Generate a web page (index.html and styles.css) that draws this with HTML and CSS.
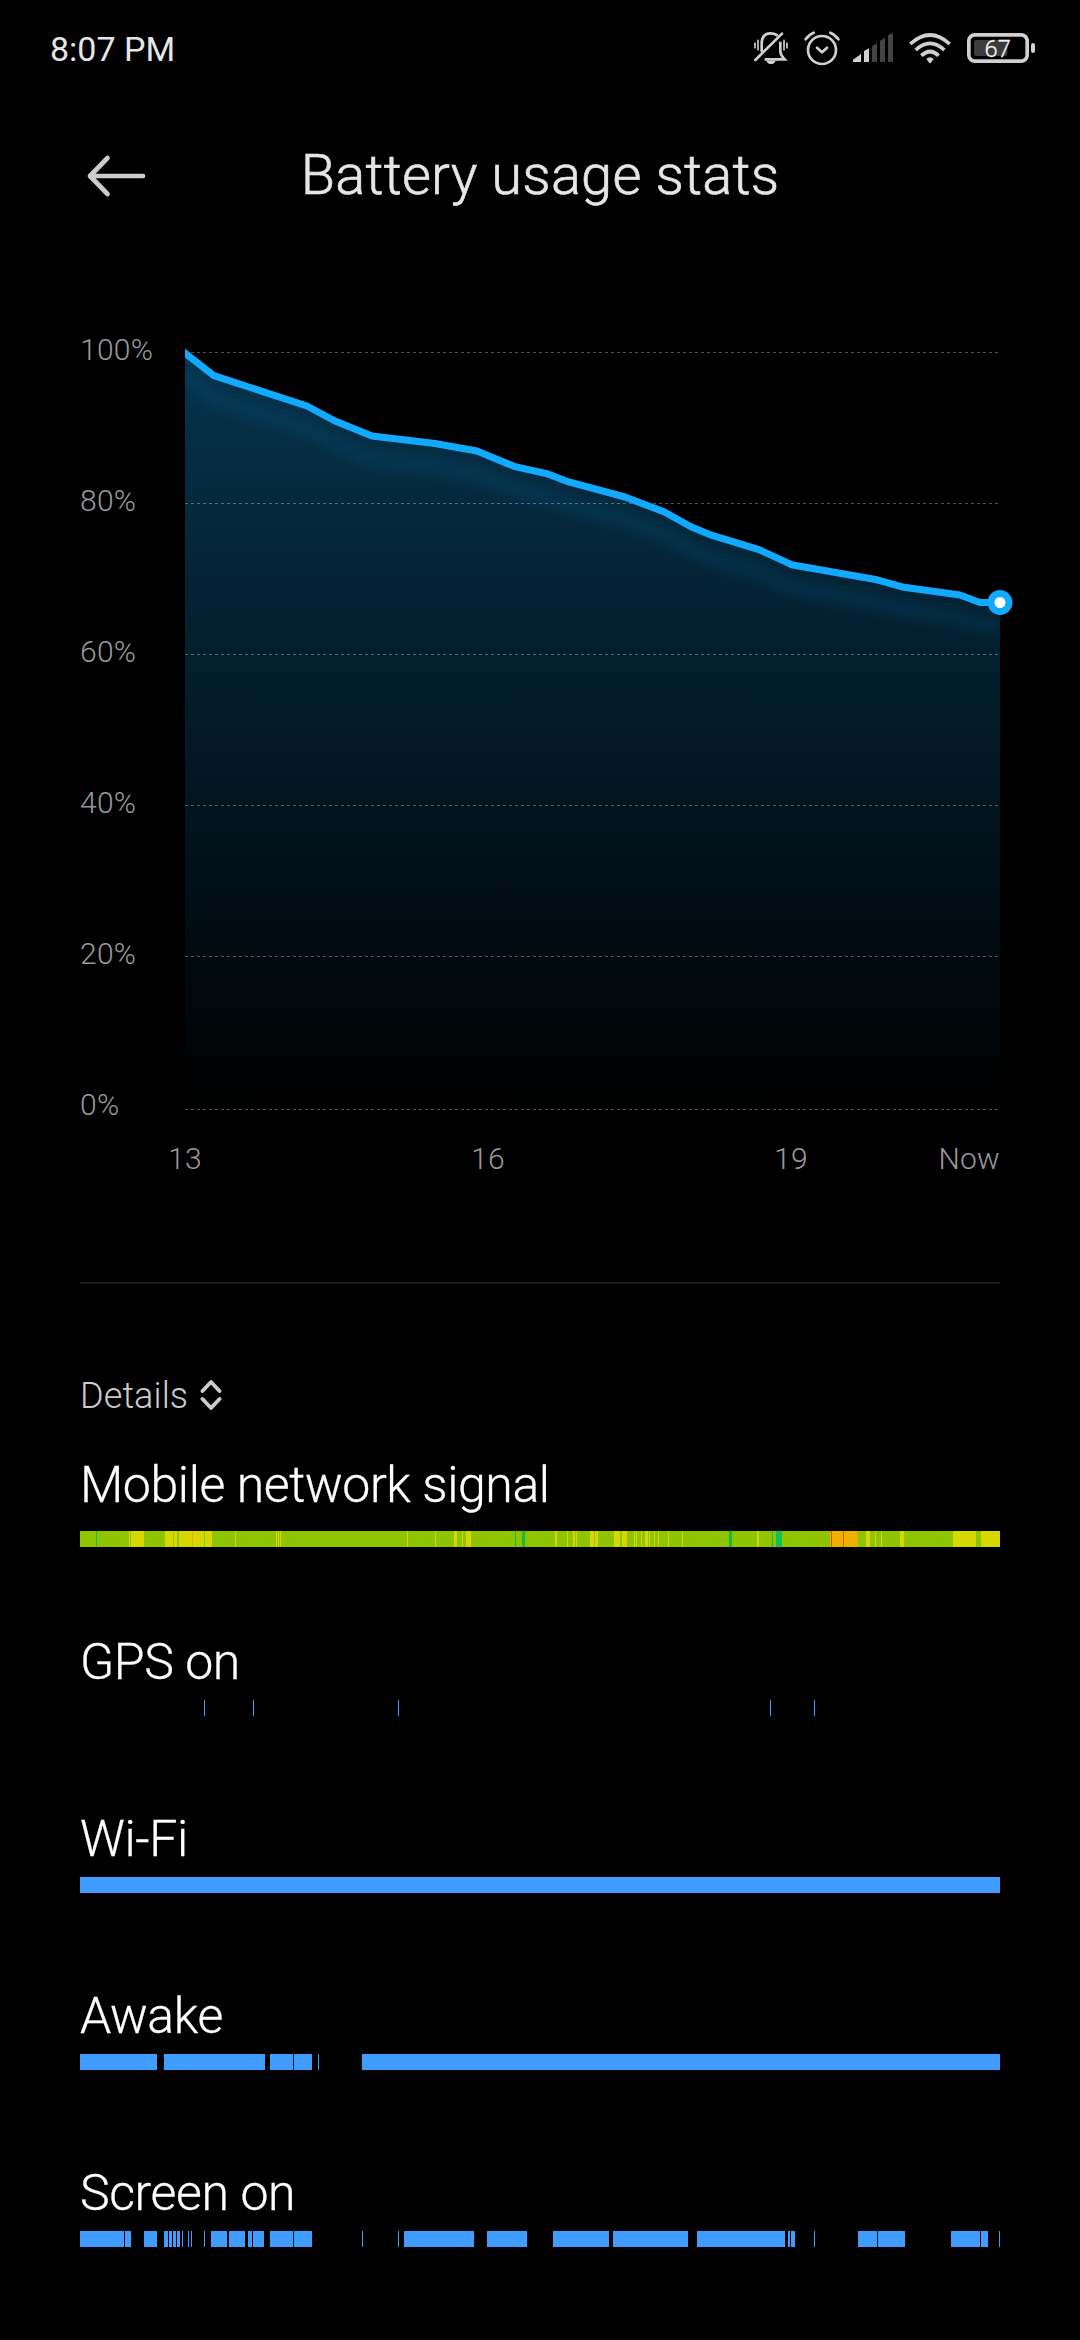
FILE: index.html
```html
<!DOCTYPE html>
<html lang="en">
<head>
<meta charset="utf-8">
<title>Battery usage stats</title>
<link rel="stylesheet" href="styles.css">
</head>
<body>
<div class="status-bar">
  <span class="clock">8:07 PM</span>
  <div class="status-icons">
    <svg width="38" height="60" viewBox="36 0 114 180" fill="none" stroke="#d0d0d0" stroke-width="8" stroke-linecap="round">
      <path d="M46 120 126 41"/>
      <path d="M65 93V72C65 50 76 40 92 40q10 0 18 5"/>
      <path d="M121 65V94q1 12 13 24H74" stroke-linecap="butt"/>
      <path d="M45 69V83M54 61V89M132 61V89M141 69V83" stroke-width="5"/>
      <path d="M79 122h28q-4 10-14 10t-14-10z" fill="#d0d0d0" stroke="none"/>
    </svg>
    <svg width="38" height="60" viewBox="186 0 114 180" fill="none" stroke="#d0d0d0" stroke-width="8" stroke-linecap="round" stroke-linejoin="round">
      <circle cx="246" cy="90" r="42"/>
      <path d="M231 83 246 97 261 83"/>
      <path d="M197 58Q206 44 221 38M271 38Q286 44 295 58"/>
    </svg>
    <svg width="43" height="60" viewBox="336 0 129 180" fill="#444">
      <path d="M339 126V119L363 102V126zM372 126V93L387 85V126z" fill="#d0d0d0"/>
      <path d="M396 126V79L411 70V126zM420 126V62L435 53V126zM444 126V46L459 38V126z"/>
    </svg>
    <svg width="45" height="60" viewBox="501 0 135 180" fill="none" stroke="#d0d0d0" stroke-width="11">
      <path d="M511 72Q570 18 629 72"/>
      <path d="M527 90Q570 50 613 90"/>
      <path d="M544 107Q570 82 596 107"/>
      <path d="M559 117Q570 106 581 117L572 129Q570 131 568 129z" fill="#d0d0d0" stroke="none"/>
    </svg>
    <svg width="72" height="60" viewBox="672 0 216 180">
      <rect x="686.5" y="44.5" width="175" height="79" rx="18" fill="none" stroke="#d0d0d0" stroke-width="11"/>
      <rect x="702" y="60" width="100" height="48" rx="6" fill="#3c3c3c"/>
      <rect x="873" y="69" width="12" height="30" rx="6" fill="#d0d0d0"/>
      <text class="battery-level" x="773" y="110">67</text>
    </svg>
  </div>
</div>

<header class="header">
  <svg class="back" width="60" height="46" viewBox="0 0 60 46">
    <path d="M21.500 6 4 24 21.500 42M4 24H57"/>
  </svg>
  <h1 class="title">Battery usage stats</h1>
</header>

<svg class="chart" width="1080" height="1032" viewBox="0 250 1080 1032">
  <defs>
    <linearGradient id="fade" gradientUnits="userSpaceOnUse" x1="0" y1="353" x2="0" y2="1109">
      <stop offset="0" stop-color="#12aaff" stop-opacity=".3"/>
      <stop offset="1" stop-color="#12aaff" stop-opacity="0"/>
    </linearGradient>
    <filter id="soft" filterUnits="userSpaceOnUse" x="140" y="330" width="900" height="350">
      <feGaussianBlur stdDeviation="7"/>
    </filter>
    <path id="level" d="M181 350 185 353 214 375.700 307 406 335 421 372 436 435 443.500 477 451 495 458.500 514 466.300 548 474 568 481.700 625 497 664 511.800 691 526.700 709 534.300 759 549.600 791.500 564.700 877 579.800 904 587.300 960 595 980 602.500H1000"/>
    <clipPath id="area"><path d="M185 353 214 375.700 307 406 335 421 372 436 435 443.500 477 451 495 458.500 514 466.300 548 474 568 481.700 625 497 664 511.800 691 526.700 709 534.300 759 549.600 791.500 564.700 877 579.800 904 587.300 960 595 980 602.500H1000V1109H185z"/></clipPath>
    <clipPath id="plot"><rect x="185" y="330" width="815" height="790"/></clipPath>
  </defs>
  <g clip-path="url(#area)">
    <rect x="185" y="340" width="815" height="769" fill="url(#fade)"/>
    <g filter="url(#soft)"><use href="#level" class="glow" y="23"/></g>
  </g>
  <path class="grid" d="M185 352.500H1000M185 503.500H1000M185 654.500H1000M185 805.500H1000M185 956.500H1000M185 1109.500H1000"/>
  <use href="#level" class="line" clip-path="url(#plot)"/>
  <circle cx="1000" cy="602.500" r="12.500" fill="#12aaff"/>
  <circle cx="1000" cy="602.500" r="5.500" fill="#fff"/>
  <g class="axis">
    <text x="80" y="360">100%</text>
    <text x="80" y="511">80%</text>
    <text x="80" y="662">60%</text>
    <text x="80" y="813">40%</text>
    <text x="80" y="964">20%</text>
    <text x="80" y="1115">0%</text>
    <text x="185" y="1169" text-anchor="middle">13</text>
    <text x="488" y="1169" text-anchor="middle">16</text>
    <text x="791" y="1169" text-anchor="middle">19</text>
    <text x="1000" y="1169" text-anchor="end">Now</text>
  </g>
</svg>

<main class="details">
  <div class="details-toggle">
    <span>Details</span>
    <svg width="22" height="34" viewBox="0 0 22 34"><path d="M2.500 12 11 3 19.500 12M2.500 20 11 29 19.500 20"/></svg>
  </div>

  <section class="stat signal">
    <h2 class="label">Mobile network signal</h2>
    <svg class="bar" width="920" height="16" viewBox="0 0 920 16">
      <path stroke="#8fc400" d="M0 8h920"/>
      <path stroke="#d6d800" d="M49 8h1m1 0h13m21 0h8m1 0h3m2 0h13m1 0h11m1 0h7m23 0h1m40 0h1m1 0h1m1 0h1M327 8h1m27 0h1m18 0h3m5 0h1m3 0h5M475 8h2m10 0h1m5 0h2m1 0h1m13 0h4m1 0h3m16 0h6m2 0h5m7 0h1m1 0h1m4 0h1m3 0h3m1 0h1m4 0h1m3 0h1m9 0h1m13 0h1M677 8h2M786 8h4m5 0h1m5 0h1m18 0h4m49 0h23m5 0h19"/>
      <path stroke="#1db83c" d="M16 8h1M435 8h1M442 8h3M649 8h3M692 8h1"/>
      <path stroke="#0fbf58" d="M696 8h6"/>
      <path stroke="#f0b000" d="M112 8h1M750 8h28"/>
      <path stroke="#d64a1c" d="M751 8h1M763 8h1"/>
    </svg>
  </section>

  <section class="stat">
    <h2 class="label">GPS on</h2>
    <svg class="bar" width="920" height="16" viewBox="0 0 920 16">
      <path d="M124 8h1M173 8h1M318 8h1M690 8h1M734 8h1"/>
    </svg>
  </section>

  <section class="stat">
    <h2 class="label">Wi-Fi</h2>
    <svg class="bar" width="920" height="16" viewBox="0 0 920 16">
      <path d="M0 8H920"/>
    </svg>
  </section>

  <section class="stat">
    <h2 class="label">Awake</h2>
    <svg class="bar" width="920" height="16" viewBox="0 0 920 16">
      <path d="M0 8H77M84 8H185M190 8H213M214 8H232M238 8H239M282 8H920"/>
    </svg>
  </section>

  <section class="stat">
    <h2 class="label">Screen on</h2>
    <svg class="bar" width="920" height="16" viewBox="0 0 920 16">
      <path d="M0 8H44M45 8H51M64 8H77M84 8H88M89 8H92M93 8H96M97 8H100M102 8H103M108 8H109M111 8H112M124 8H125M131 8H147M149 8H165M168 8H172M173 8H184M190 8H213M214 8H232M282 8H283M318 8H319M324 8H394M407 8H447M473 8H529M533 8H608M617 8H705M708 8H710M711 8H715M734 8H735M778 8H797M798 8H825M871 8H900M901 8H908M919 8H920"/>
    </svg>
  </section>
</main>
</body>
</html>
```
FILE: styles.css
```css
body {
  margin: 0;
  width: 1080px;
  height: 2340px;
  overflow: hidden;
  background: #000;
  color: #fff;
  font-family: Roboto, "Noto Sans", sans-serif;
  font-weight: 300;
}

svg {
  display: block;
  flex: none;
}

.status-bar {
  display: flex;
  align-items: center;
  justify-content: space-between;
  height: 100px;
  padding: 0 44px 0 50px;
}

.clock {
  padding-bottom: 2px;
  font-size: 34px;
  line-height: 40px;
  font-weight: 400;
  color: #e6e6e6;
}

.status-icons {
  display: flex;
  gap: 12px;
}

.battery-level {
  font-size: 71px;
  font-weight: 300;
  fill: #f0f0f0;
  stroke: #f0f0f0;
  stroke-width: 1;
  text-anchor: middle;
}

.header {
  display: grid;
  grid-template-columns: 60px 1fr 60px;
  align-items: center;
  height: 150px;
  padding: 0 86px;
}

.back {
  fill: none;
  stroke: #ccc;
  stroke-width: 4.7;
  stroke-linecap: round;
  stroke-linejoin: round;
}

.title {
  margin: 0;
  font-size: 56px;
  line-height: 66px;
  font-weight: 300;
  letter-spacing: 0.2px;
  -webkit-text-stroke: 0.6px #e6e6e6;
  text-align: center;
  color: #e6e6e6;
}

.glow {
  fill: none;
  stroke: #12aaff;
  stroke-opacity: 0.16;
  stroke-width: 8;
}

.grid {
  fill: none;
  stroke: #fff;
  stroke-opacity: 0.32;
  stroke-width: 1;
  stroke-dasharray: 3 3;
}

.line {
  fill: none;
  stroke: #12aaff;
  stroke-width: 7;
  stroke-linejoin: round;
}

.axis {
  font-size: 30px;
  letter-spacing: 0.25px;
  fill: #999;
}

.details {
  margin: 0 80px;
  border-top: 2px solid #1a1a1a;
}

.details-toggle {
  display: flex;
  align-items: center;
  gap: 12px;
  margin: 91px 0 38px;
  font-size: 36px;
  line-height: 42px;
  letter-spacing: 0.1px;
  color: #ccc;
}

.details-toggle svg {
  fill: none;
  stroke: #ccc;
  stroke-width: 3.8;
  stroke-linecap: round;
  stroke-linejoin: round;
}

.stat {
  height: 177px;
}

.label {
  margin: 0;
  font-size: 50px;
  line-height: 60px;
  font-weight: 300;
  letter-spacing: -0.4px;
  -webkit-text-stroke: 0.3px #fff;
}

.bar {
  margin-top: 8px;
  fill: none;
  stroke: #409cff;
  stroke-width: 16;
  shape-rendering: crispEdges;
}

.signal .bar {
  margin-top: 16px;
}
```
